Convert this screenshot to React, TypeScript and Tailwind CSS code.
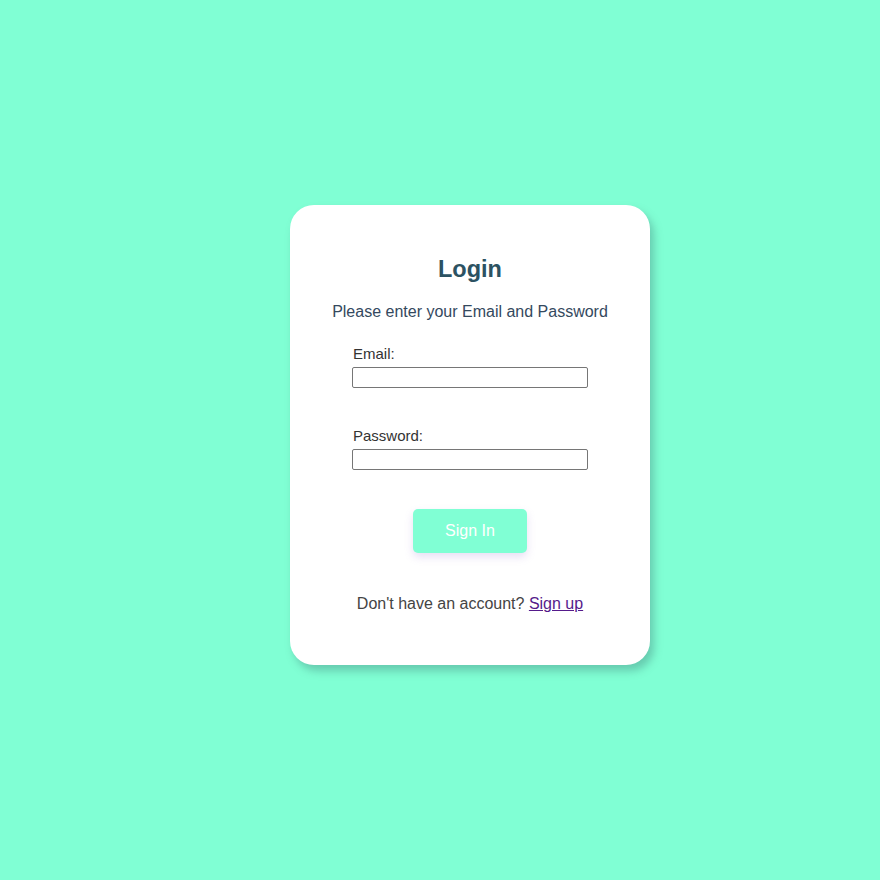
export default function App() {
  return (
    <div className="min-h-screen w-full bg-[#80ffd4] flex justify-center pl-[60px] pt-[205px] font-['Liberation_Sans',Arial,sans-serif]">
      <div className="w-[360px] h-[460px] bg-white rounded-[24px] shadow-[4px_6px_8px_rgba(70,140,130,0.45)] flex flex-col items-center pt-[51px]">
        <h1 className="text-[23.5px] leading-[26px] font-bold text-[#2c5262]">Login</h1>
        <p className="mt-[20px] text-[16px] leading-[20px] text-[#34495e]">Please enter your Email and Password</p>

        <form className="w-[236px] mt-[22px] flex flex-col" onSubmit={(e) => e.preventDefault()}>
          <label htmlFor="email" className="pt-px text-[15px] leading-[18px] text-[#333] pl-px mb-[4px]">Email:</label>
          <input id="email" type="email" className="h-[21px] w-full border border-[#767676] rounded-[2px] bg-white outline-none" />

          <label htmlFor="password" className="mt-[38px] pt-px text-[15px] leading-[18px] text-[#333] pl-px mb-[4px]">Password:</label>
          <input id="password" type="password" className="h-[21px] w-full border border-[#767676] rounded-[2px] bg-white outline-none" />

          <button type="submit" className="mt-[39px] mx-auto w-[114px] h-[44px] rounded-[5px] bg-[#80ffd4] text-white text-[16px] shadow-[0_4px_8px_rgba(150,110,210,0.22)]">
            Sign In
          </button>
        </form>

        <p className="mt-[41px] text-[16px] leading-[20px] text-[#444]">
          Don't have an account? <a href="#" className="text-[#551a8b] underline">Sign up</a>
        </p>
      </div>
    </div>
  );
}
